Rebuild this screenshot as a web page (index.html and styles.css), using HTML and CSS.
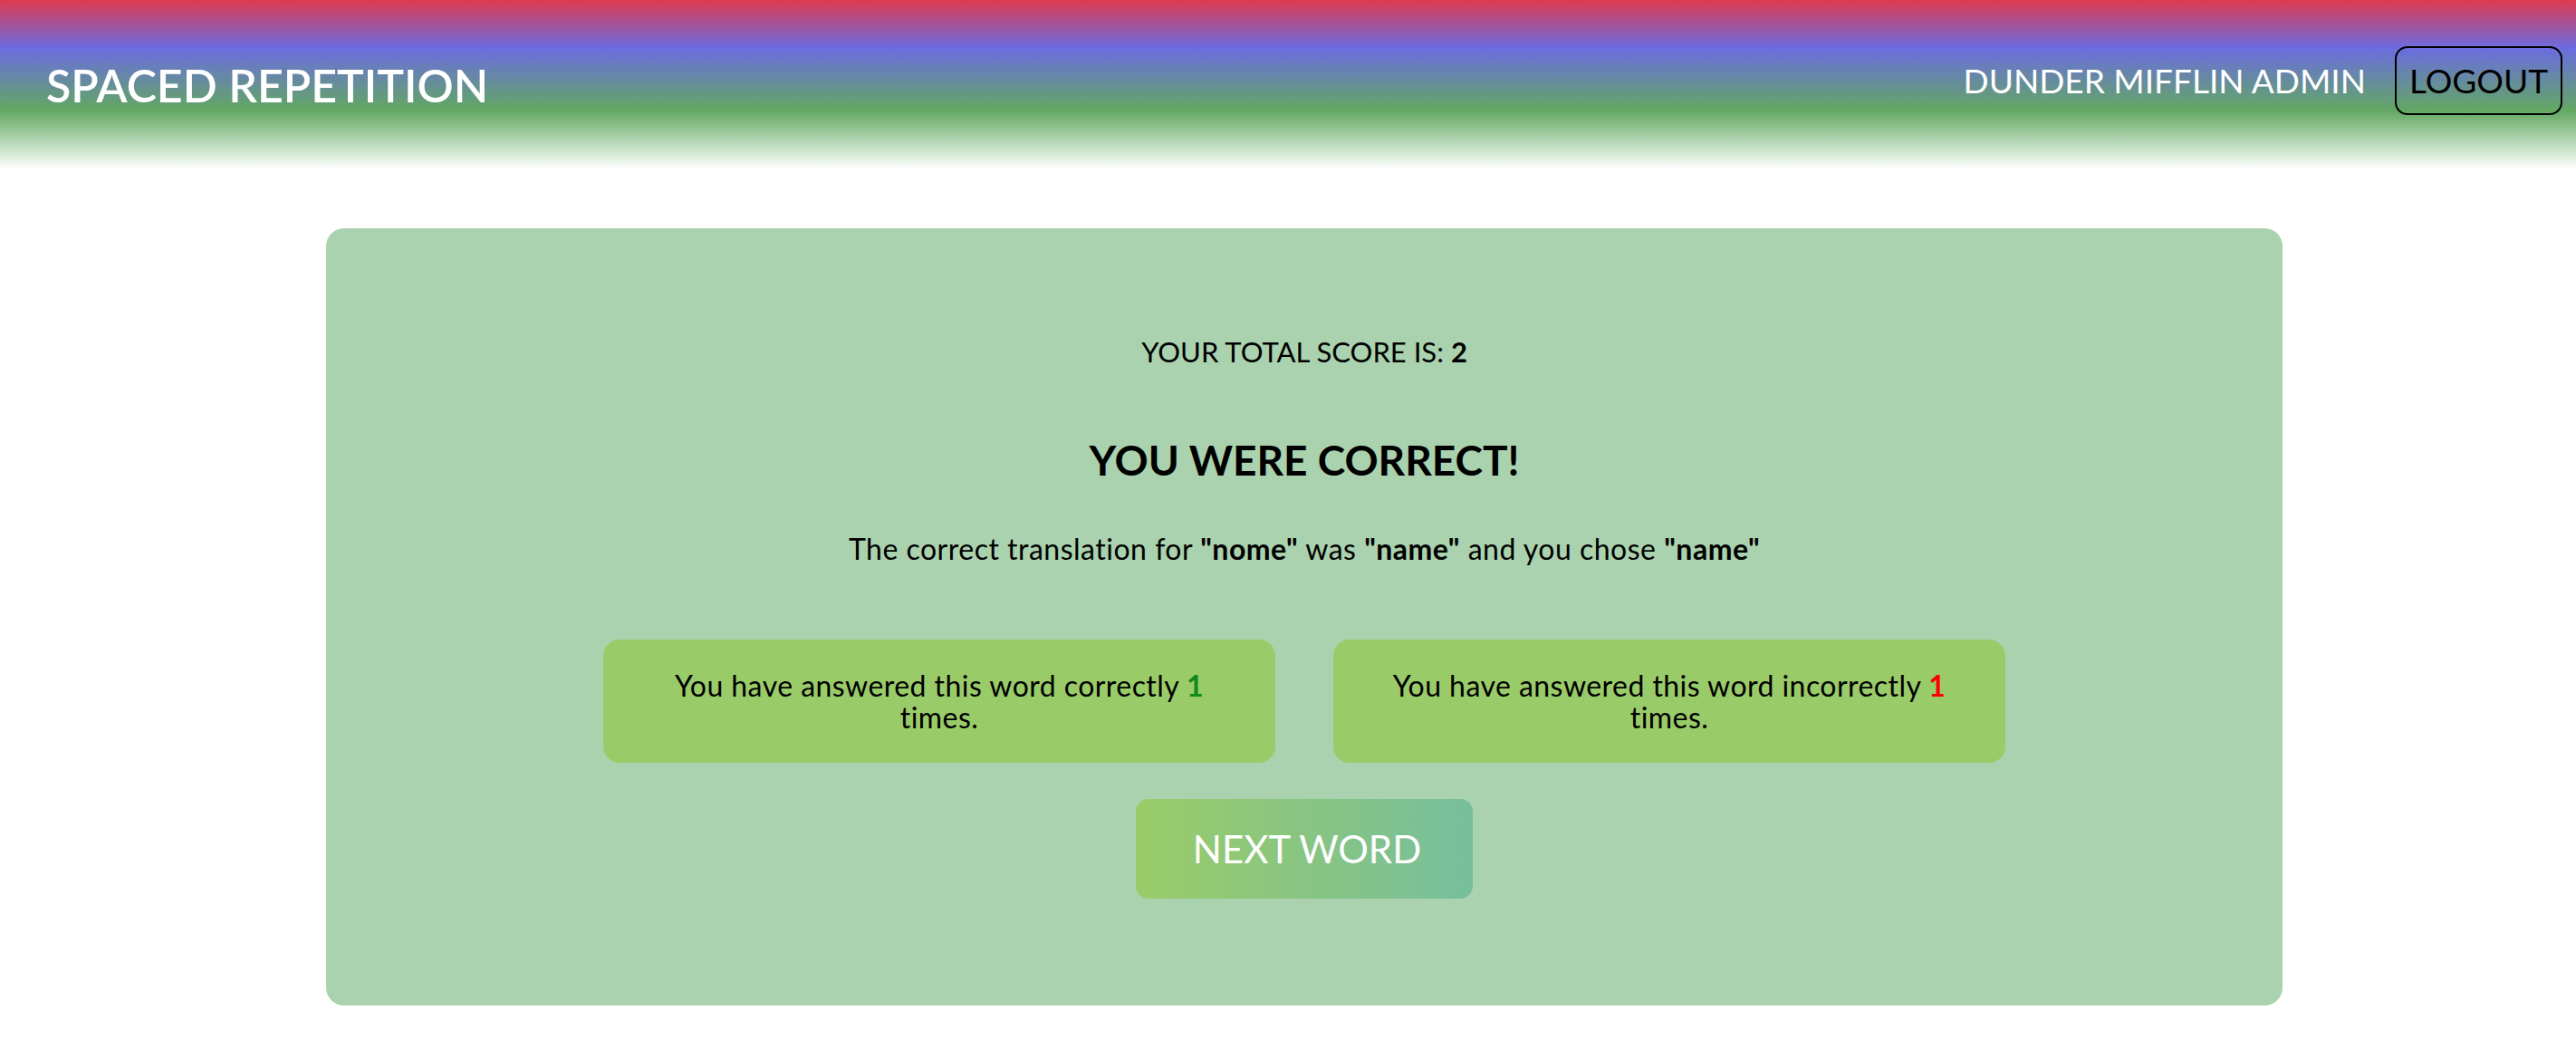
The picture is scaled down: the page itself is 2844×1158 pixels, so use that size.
FILE: index.html
```html
<!DOCTYPE html>
<html lang="en">
<head>
<meta charset="utf-8">
<title>Spaced Repetition</title>
<link rel="stylesheet" href="styles.css">
</head>
<body>
<header class="header">
  <h1 class="brand">SPACED REPETITION</h1>
  <nav class="nav">
    <span class="user">DUNDER MIFFLIN ADMIN</span>
    <button class="logout">LOGOUT</button>
  </nav>
</header>
<main class="card">
  <p class="score">YOUR TOTAL SCORE IS: <b>2</b></p>
  <h2 class="result">YOU WERE CORRECT!</h2>
  <p class="translation">The correct translation for <b>"nome"</b> was <b>"name"</b> and you chose <b>"name"</b></p>
  <div class="stats">
    <div class="stat">You have answered this word correctly <b class="good">1</b><br>times.</div>
    <div class="stat">You have answered this word incorrectly <b class="bad">1</b><br>times.</div>
  </div>
  <button class="next">NEXT WORD</button>
</main>
</body>
</html>
```

FILE: styles.css
```css
html, body {
  margin: 0;
  padding: 0;
  background: #ffffff;
  font-family: Lato, "Open Sans", sans-serif;
  color: #000;
}

.header {
  display: flex;
  justify-content: space-between;
  align-items: flex-start;
  height: 190px;
  padding: 0 15px 0 51px;
  background: linear-gradient(180deg, #e03a50 0px, #6b6ce0 53px, #62a862 122px, #ffffff 187px);
}

.brand {
  margin: 64px 0 0;
  font-size: 50px;
  line-height: 60px;
  font-weight: 600;
  color: #fff;
}

.nav {
  display: flex;
  align-items: flex-start;
  gap: 32px;
}

.user {
  margin-top: 66px;
  font-size: 37px;
  line-height: 46px;
  color: #fff;
}

.logout {
  margin-top: 51px;
  padding: 14px;
  font-family: Lato, "Open Sans", sans-serif;
  font-size: 37px;
  line-height: 44px;
  color: #000;
  background: transparent;
  border: 2px solid #000;
  border-radius: 14px;
}

.card {
  display: flex;
  flex-direction: column;
  align-items: center;
  box-sizing: border-box;
  width: 2160px;
  height: 858px;
  margin: 62px 0 0 360px;
  padding: 116px 0 118px;
  background: #aad2ae;
  border-radius: 20px;
}

.score {
  margin: 0;
  font-size: 31px;
  line-height: 40px;
}

.result {
  margin: 72px 0 0;
  font-size: 46px;
  line-height: 56px;
  font-weight: 700;
}

.translation {
  margin: 50px 0 0;
  font-size: 32px;
  letter-spacing: 0.5px;
  line-height: 40px;
}

.stats {
  display: flex;
  gap: 64px;
  margin-top: 80px;
}

.stat {
  box-sizing: border-box;
  width: 742px;
  padding: 33px 20px;
  font-size: 32px;
  letter-spacing: 0.45px;
  line-height: 35px;
  text-align: center;
  background: #9acb69;
  border-radius: 18px;
}

.good { color: #0f8a1e; }
.bad { color: #ff0000; }

.next {
  margin-top: 40px;
  width: 372px;
  height: 110px;
  padding: 0 0 0 6px;
  font-family: Lato, "Open Sans", sans-serif;
  font-size: 42px;
  color: #fff;
  border: none;
  border-radius: 14px;
  background: linear-gradient(90deg, #9acc68, #77be9c);
}
```
